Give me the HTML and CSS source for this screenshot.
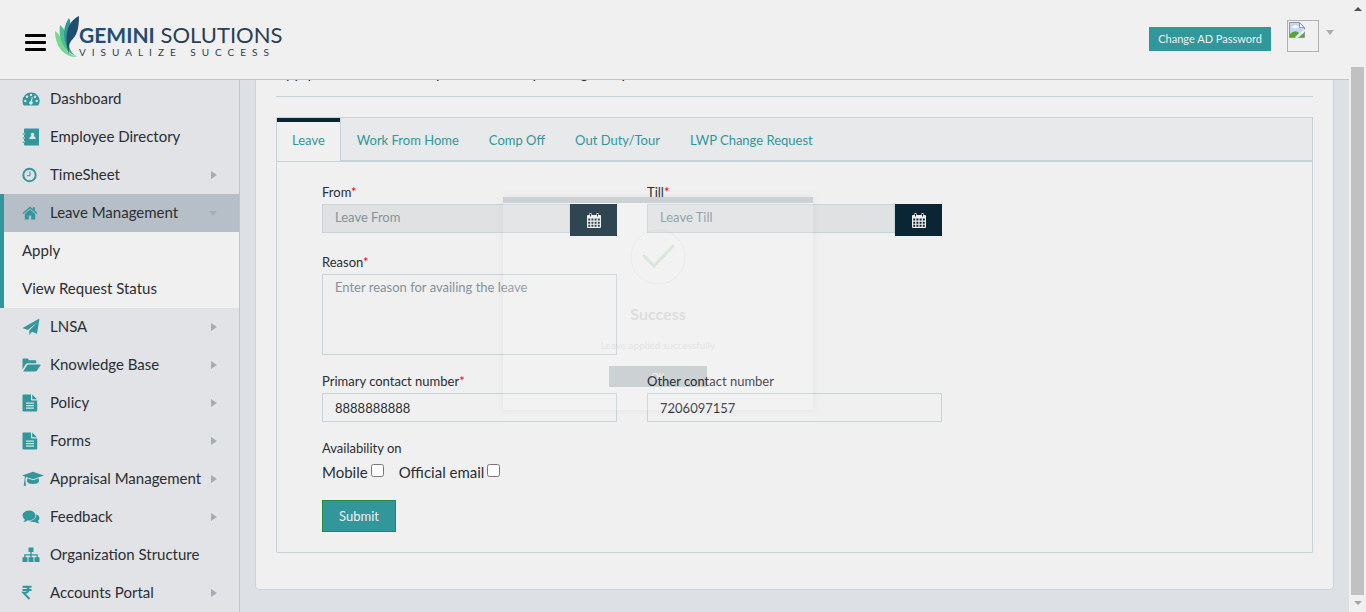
FILE: index.html
```
<!DOCTYPE html>
<html lang="en">
<head>
<meta charset="utf-8">
<title>Apply Leave</title>
<link rel="stylesheet" href="styles.css">
</head>
<body>
<div class="app">
  <header class="topbar">
    <button class="burger" aria-label="Toggle menu"><span></span><span></span><span></span></button>
    <a class="logo" href="#">
      <svg class="leaf" viewBox="0 0 26 42" aria-hidden="true">
        <path fill="#76d88d" d="M0 15C4 18 8 23 9 29c2 6 6 10 14 12C10 42 0 31 0 15z"/>
        <path fill="#50bd91" d="M5 9c6 5 7 11 7 17 1 6 4 11 9 14C10 36 3 25 5 9z"/>
        <path fill="#319a98" d="M14 2c3 6 1 12 0 20-1 7 1 13 5 17C9 32 5 15 14 2z"/>
        <path fill="#204e70" d="M24 0c0 13-2 19-8 25-2 3-3 8-2 13C9 23 11 6 24 0z"/>
      </svg>
      <span class="logo-text">
        <span class="logo-name"><b>GEMINI</b> SOLUTIONS</span>
        <span class="logo-tag">VISUALIZE SUCCESS</span>
      </span>
    </a>
    <div class="account">
      <button class="password">Change AD Password</button>
      <button class="profile" aria-label="Profile">
        <span class="avatar"><svg viewBox="0 0 16 16" width="16" height="16" aria-hidden="true"><path fill="#c4d7f5" stroke="#8d96a6" d="M.5.5h10l5 5v10H.5z"/><path fill="#fff" d="M3 6q0-2 2-2 1-2 3 0 2 0 2 2zM10 1v5h5z"/><path fill="none" stroke="#8d96a6" d="M10.500.5v5h5"/><path fill="#51a636" d="M1 15v-3q5-5 9-1l-4 4zM10 15l5-4v4z"/><path stroke="#f0f0f0" stroke-width="2" d="M7 16l9-8"/></svg></span>
        <span class="caret"></span>
      </button>
    </div>
  </header>

  <div class="layout">
    <nav class="sidebar">
      <a class="item" href="#"><svg class="icon" viewBox="0 0 18 16"><path d="M9 1.500A8.500 8.500 0 0 0 .5 10c0 1.500.4 3 1.200 4.500h14.600A8.500 8.500 0 0 0 9 1.500z"/><g class="cut"><circle cx="3.300" cy="10" r="1.200"/><circle cx="5" cy="5.800" r="1.200"/><circle cx="9" cy="4" r="1.200"/><circle cx="13" cy="5.800" r="1.200"/><circle cx="14.700" cy="10" r="1.200"/><path d="M9.900 6l.9.200-.8 4.100a1.900 1.900 0 1 1-1.200-.3z"/></g></svg>Dashboard</a>
      <a class="item" href="#"><svg class="icon" viewBox="0 0 18 16"><path d="M3-.5h13.500q.5 0 .5.5v16q0 .5-.5.5H3q-1 0-1-1V14H.8v-2H2v-2H.8V8H2V6H.8V4H2V.5q0-1 1-1z"/><g class="cut"><circle cx="10.500" cy="5.500" r="1.800"/><path d="M7.300 10q0-2.500 2.200-3h2q2.200.5 2.200 3z"/><path d="M1 4.500h2v1H1zM1 8.500h2v1H1zM1 12.300h2v1H1z"/></g></svg>Employee Directory</a>
      <a class="item" href="#"><svg class="icon" viewBox="0 0 18 16"><circle class="line" cx="7.500" cy="8" r="6.200"/><path class="line thin" d="M8 4.500v4.200H5"/></svg>TimeSheet<span class="arrow"></span></a>
      <div class="group">
        <a class="item current" href="#"><svg class="icon" viewBox="0 0 18 16"><path d="M.5 8L8 1.600l2.800 2.300V2.300h2v3.300L15.500 8l-.9 1L8 3.400 1.400 9z"/><path d="M2.800 9L8 4.600 13.200 9v5.500h-4v-4H6.800v4h-4z"/></svg>Leave Management<span class="arrow down"></span></a>
        <a class="item sub" href="#">Apply</a>
        <a class="item sub" href="#">View Request Status</a>
      </div>
      <a class="item" href="#"><svg class="icon" viewBox="0 0 18 16"><path d="M17.500-.5L15 14.800l-5-2.100-2.700 3.200v-4.500L15 3.500l-9.200 7.400L.5 9z"/></svg>LNSA<span class="arrow"></span></a>
      <a class="item" href="#"><svg class="icon" viewBox="0 0 18 16"><path d="M.5 12.500V2.500q0-1 1-1h4q1 0 1 1v.8h6.800q1 0 1 1v2H6Q4.500 6.300 3.700 7.300z"/><path d="M1.200 14.500l3.500-5.800q.8-1.200 2-1.200H18q1 0 .4 1l-3.200 4.800q-.8 1.200-2 1.200z"/></svg>Knowledge Base<span class="arrow"></span></a>
      <a class="item" href="#"><svg class="icon" viewBox="0 0 18 16"><path d="M1.300-.5H9v5q0 1 1 1h5.200v10.200q0 .8-.8.800H1.300q-.8 0-.8-.8V.3q0-.8.8-.8zM10.200-.5L15 4.300h-4.800z"/><path class="cut" d="M4 7.500h8v1.200H4zM4 10h8v1.200H4zM4 12.500h8v1.200H4z"/></svg>Policy<span class="arrow"></span></a>
      <a class="item" href="#"><svg class="icon" viewBox="0 0 18 16"><path d="M1.300-.5H9v5q0 1 1 1h5.200v10.200q0 .8-.8.800H1.300q-.8 0-.8-.8V.3q0-.8.8-.8zM10.200-.5L15 4.300h-4.800z"/><path class="cut" d="M4 7.500h8v1.200H4zM4 10h8v1.200H4zM4 12.500h8v1.200H4z"/></svg>Forms<span class="arrow"></span></a>
      <a class="item" href="#"><svg class="icon" viewBox="0 0 18 16"><path d="M11 .8L22 4.500 11 8.200 4.200 5.900Q3.300 6.700 3.300 9l.8 5.800H1.700L2.500 9Q2.500 6.500 3 5.500L0 4.500z"/><path d="M5.300 7.300L11 9.200l5.700-1.900.3 3.200q-1 2.500-6 2.500t-6-2.500z"/></svg>Appraisal Management<span class="arrow"></span></a>
      <a class="item" href="#"><svg class="icon" viewBox="0 0 18 16"><ellipse cx="7" cy="6.500" rx="6.500" ry="5"/><path d="M2.800 9.500q.2 2-1.600 3.500Q4 12.800 6 11z"/><path d="M14.500 5.200q3 1.200 3 3.800 0 1.600-1.500 2.800.3 1.500 1.500 2.500-3 0-4.500-1.400-3.700.4-6-1.100 7 0 7.500-6.600z"/></svg>Feedback<span class="arrow"></span></a>
      <a class="item" href="#"><svg class="icon" viewBox="0 0 18 16"><path d="M6.500.5h5v4.500H9.700v2.300h6.100v3h1.700V15h-5v-4.700h2V8.500H9.700v1.800h1.800V15h-5v-4.700h1.800V8.500H3.500v1.800h2V15h-5v-4.700h1.700v-3h6.100V5H6.500z"/></svg>Organization Structure</a>
      <a class="item" href="#"><svg class="icon" viewBox="0 0 18 16"><path class="line" d="M.5 1.800h9M.5 5h9M1 1.800h2q3.500 0 3.500 3t-4 3H1.500l6 6.200"/></svg>Accounts Portal<span class="arrow"></span></a>
    </nav>

    <main class="main">
      <section class="card">
        <h1 class="title">Apply Leave, WFH, Comp Off, Out Duty, Change Request</h1>
        <div class="tabs">
          <a class="tab active" href="#">Leave</a>
          <a class="tab" href="#">Work From Home</a>
          <a class="tab" href="#">Comp Off</a>
          <a class="tab" href="#">Out Duty/Tour</a>
          <a class="tab" href="#">LWP Change Request</a>
        </div>
        <form class="panel">
          <div class="fields">
            <div class="field">
              <label for="from">From<i>*</i></label>
              <div class="date">
                <input id="from" class="box" type="text" placeholder="Leave From" readonly>
                <button type="button" aria-label="Choose start date"><svg viewBox="0 0 14 15"><path fill="#f0f0f0" fill-rule="evenodd" d="M0 3q0-1 1-1h1.500V0h2v2h5V0h2v2H13q1 0 1 1v11q0 1-1 1H1q-1 0-1-1zM1.200 5.500v2h2v-2zM4.400 5.500v2h2v-2zM7.600 5.500v2h2v-2zM10.800 5.500v2h2v-2zM1.200 8.700v2h2v-2zM4.400 8.700v2h2v-2zM7.600 8.700v2h2v-2zM10.800 8.700v2h2v-2zM1.200 11.800v2h2v-2zM4.400 11.800v2h2v-2zM7.600 11.800v2h2v-2zM10.800 11.800v2h2v-2zM3 1v2.500h1V1zM10 1v2.500h1V1z"/></svg></button>
              </div>
            </div>
            <div class="field">
              <label for="till">Till<i>*</i></label>
              <div class="date">
                <input id="till" class="box" type="text" placeholder="Leave Till" readonly>
                <button type="button" aria-label="Choose end date"><svg viewBox="0 0 14 15"><path fill="#f0f0f0" fill-rule="evenodd" d="M0 3q0-1 1-1h1.500V0h2v2h5V0h2v2H13q1 0 1 1v11q0 1-1 1H1q-1 0-1-1zM1.200 5.500v2h2v-2zM4.400 5.500v2h2v-2zM7.600 5.500v2h2v-2zM10.800 5.500v2h2v-2zM1.200 8.700v2h2v-2zM4.400 8.700v2h2v-2zM7.600 8.700v2h2v-2zM10.800 8.700v2h2v-2zM1.200 11.800v2h2v-2zM4.400 11.800v2h2v-2zM7.600 11.800v2h2v-2zM10.800 11.800v2h2v-2zM3 1v2.500h1V1zM10 1v2.500h1V1z"/></svg></button>
              </div>
            </div>
            <div class="field first">
              <label for="reason">Reason<i>*</i></label>
              <textarea id="reason" class="box" placeholder="Enter reason for availing the leave"></textarea>
            </div>
            <div class="field first">
              <label for="primary">Primary contact number<i>*</i></label>
              <input id="primary" class="box" type="text" value="8888888888">
            </div>
            <div class="field">
              <label for="other">Other contact number</label>
              <input id="other" class="box" type="text" value="7206097157">
            </div>
          </div>
          <fieldset class="availability">
            <legend>Availability on</legend>
            <div class="checks">
              <label>Mobile<input type="checkbox"></label>
              <label>Official email<input type="checkbox"></label>
            </div>
          </fieldset>
          <button class="submit" type="button">Submit</button>
        </form>
      </section>
    </main>
  </div>

  <div class="dialog" role="dialog" aria-labelledby="dialog-title">
    <svg class="tick" viewBox="0 0 56 56" aria-hidden="true"><circle cx="28" cy="28" r="27" fill="none" stroke="#b9dab0"/><path d="M14 27l10 10 19-20" fill="none" stroke="#5cb85c" stroke-width="3" stroke-linecap="round"/></svg>
    <h2 id="dialog-title">Success</h2>
    <p>Leave applied successfully</p>
    <button class="ok">OK</button>
  </div>
</div>
<div class="scrollbar" aria-hidden="true"><span class="up"></span><span class="thumb"></span><span class="down"></span></div>
</body>
</html>
```
FILE: styles.css
```
* { box-sizing: border-box; }
body {
  margin: 0;
  height: 100vh;
  display: flex;
  overflow: hidden;
  background: #dde1e6;
  color: #2b2e33;
  font: 14px/20px Lato, "Liberation Sans", sans-serif;
}
button, input, textarea { font: inherit; color: inherit; margin: 0; }
button { border: 0; cursor: pointer; }
a { color: inherit; text-decoration: none; }
.app { flex: 1; min-width: 0; position: relative; overflow: hidden; }

.topbar {
  position: absolute;
  z-index: 2;
  top: 0;
  left: 0;
  right: 0;
  height: 80px;
  display: flex;
  align-items: flex-start;
  padding: 0 15px 0 25px;
  background: #f0f0f0;
  border-bottom: 1px solid #b9c7d1;
}
.burger {
  width: 21px;
  margin-top: 34px;
  padding: 0;
  background: none;
  display: grid;
  gap: 4px;
}
.burger span { height: 3px; background: #000; border-radius: 1px; }
.logo { display: flex; margin: 16px 0 0 9px; }
.leaf { width: 26px; height: 42px; }
.logo-text { display: flex; flex-direction: column; padding-top: 7px; margin-left: -2px; color: #2c3f50; }
.logo-name { font-size: 22px; line-height: 24px; white-space: nowrap; }
.logo-name b { color: #204e70; font-size: 21px; }
.logo-tag { font-size: 10px; line-height: 10px; letter-spacing: 6px; white-space: nowrap; }
.account { display: flex; gap: 16px; margin-left: auto; padding-top: 20px; }
.password {
  height: 24px;
  margin-top: 7px;
  padding: 0 9px;
  background: #32979b;
  color: #f0f0f0;
  font-size: 11px;
  line-height: 16px;
}
.profile { display: flex; gap: 7px; padding: 0; background: none; }
.avatar { width: 32px; height: 32px; border: 1px solid #b0b0b0; padding: 1px; display: flex; }
.caret { margin-top: 10px; border: 4px solid transparent; border-top: 5px solid #a3afb8; border-bottom: 0; }

.layout { display: flex; min-height: 100vh; }
.sidebar {
  flex: 0 0 240px;
  padding-top: 80px;
  background: #e1e3e6;
  border-right: 1px solid #b9c7d1;
}
.item {
  display: flex;
  align-items: center;
  height: 38px;
  padding: 0 22px 2px;
  font-size: 15px;
  white-space: nowrap;
}
.icon { flex: none; width: 18px; height: 16px; margin: 2px 10px 0 0; fill: #32979b; overflow: visible; }
.icon .cut { fill: #e1e3e6; }
.icon .line { fill: none; stroke: #32979b; stroke-width: 2; }
.icon .thin { stroke-width: 1; }
.arrow { margin: 2px 0 0 auto; border: 4px solid transparent; border-left: 6px solid #a3afb8; border-right: 0; }
.arrow.down { border: 4px solid transparent; border-top: 5px solid #a3afb8; border-bottom: 0; }
.group { border-left: 4px solid #32979b; }
.group .item { padding-left: 18px; background: #f0f0f0; }
.group .current { background: #b6bfc7; }

.main { flex: 1; min-width: 0; padding: 60px 15px 22px; }
.card {
  min-height: 530px;
  padding: 0 20px 36px;
  background: #f0f0f0;
  border: 1px solid #cbd4db;
  border-radius: 4px;
}
.title {
  margin: 0 0 20px;
  padding: 1px 0 14px;
  border-bottom: 1px solid #c6d2da;
  font-size: 15px;
  line-height: 20px;
  font-weight: 400;
}
.tabs {
  display: flex;
  background: #e7e9eb;
  border: 1px solid #c6d4da;
  border-bottom: 2px solid #c6d4da;
}
.tab {
  height: 42px;
  padding: 12px 15px 0;
  color: #32979b;
  font-size: 13px;
  white-space: nowrap;
}
.tab.active {
  height: 43px;
  margin: 0 2px -1px 0;
  padding-top: 8px;
  background: #f0f0f0;
  border-top: 4px solid #0a2533;
  box-shadow: 1px 0 #c6d4da;
}
.panel {
  padding: 20px 45px;
  border: 1px solid #c6d4da;
  border-top: 0;
  border-radius: 0 0 2px 2px;
}
.fields { display: grid; grid-template-columns: repeat(2, minmax(0, 295px)); gap: 16px 30px; }
.field { font-size: 13px; }
.field label { display: block; margin-bottom: 2px; }
.field i { color: #f00; font-style: normal; }
.first { grid-column: 1; }
.box {
  display: block;
  width: 100%;
  height: 29px;
  padding: 2px 12px;
  background: transparent;
  border: 1px solid #c6d4da;
  border-radius: 0;
  outline: 0;
}
.box::placeholder { color: #84939c; opacity: 1; }
textarea.box { height: 81px; resize: none; }
.date { display: flex; }
.date .box { flex: 1; min-width: 0; padding: 0 12px 3px; background: #dfe1e3; }
.date button { width: 47px; height: 32px; padding: 0; display: grid; place-items: center; background: #0a2533; }
.date svg { width: 14px; height: 15px; }
.availability { margin: 16px 0 18px; padding: 0; border: 0; min-width: 0; }
.availability legend { padding: 0; margin-bottom: 4px; font-size: 13px; }
.checks { display: flex; gap: 15px; font-size: 15px; }
.checks label { display: flex; align-items: flex-start; gap: 3px; }
.checks input { width: 13px; height: 13px; margin-top: 2px; }
.submit { height: 32px; padding: 0 16px; background: #32979b; border: 1px solid #228b3c; color: #f0f0f0; font-size: 13px; }

.dialog {
  position: absolute;
  z-index: 3;
  left: 503px;
  top: 197px;
  width: 310px;
  height: 213px;
  display: flex;
  flex-direction: column;
  align-items: center;
  padding-top: 26px;
  background: #fff;
  border-top: 6px solid #0a2533;
  box-shadow: 0 0 6px #999;
  opacity: .15;
}
.tick { width: 56px; height: 56px; }
.dialog h2 { margin: 19px 0 11px; font-size: 16px; line-height: 20px; font-weight: 700; color: #777; }
.dialog p { margin: 0; font-size: 10px; line-height: 20px; color: #999; }
.ok { width: 98px; height: 21px; margin-top: 11px; padding: 0; background: #0a2533; color: #fff; font-size: 9px; }

.scrollbar { flex: 0 0 17px; padding: 7px 2px; display: flex; flex-direction: column; align-items: center; background: #f0f0f0; }
.up { border: 4px solid transparent; border-bottom: 4px solid #505050; border-top: 0; }
.thumb { width: 13px; flex: 1; margin: 56px 0 6px; background: #c1c1c1; }
.down { border: 4px solid transparent; border-top: 4px solid #a3a3a3; border-bottom: 0; }
.arrow.down { width: 0; }
```
